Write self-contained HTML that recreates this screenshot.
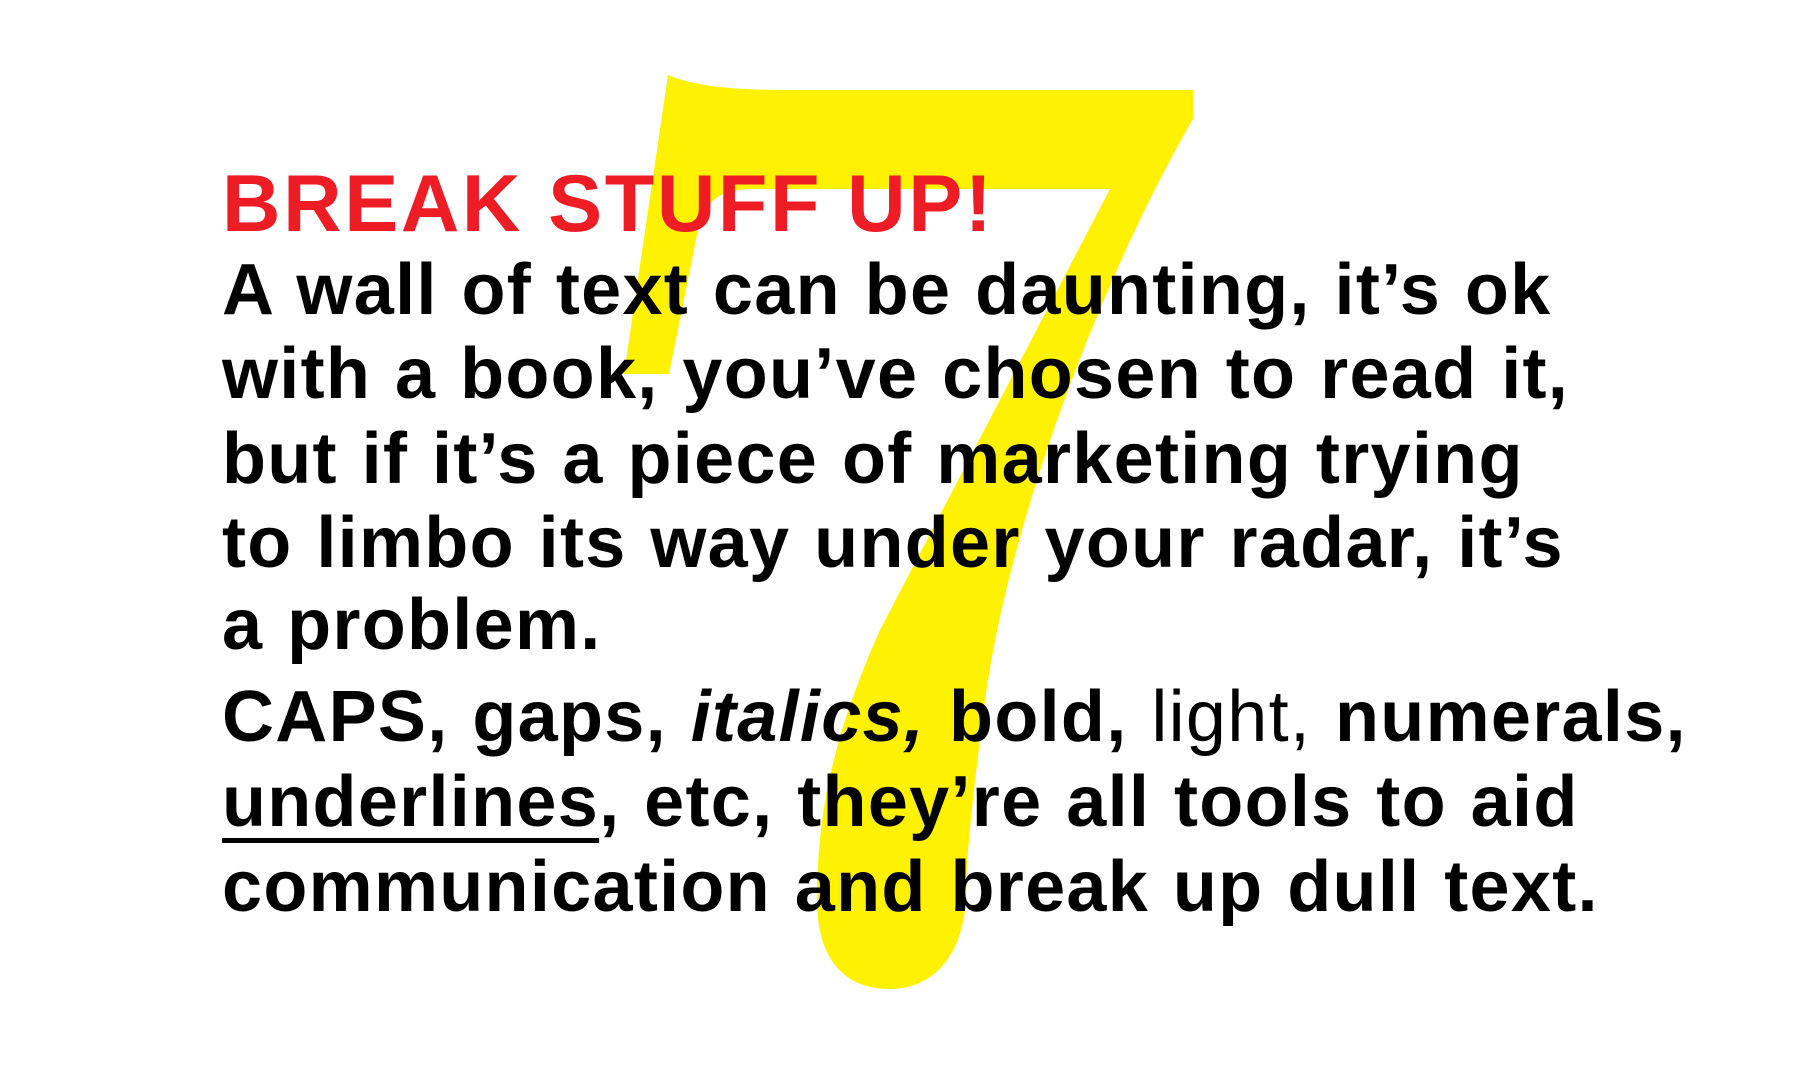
<!DOCTYPE html>
<html><head><meta charset="utf-8"><style>
html,body{margin:0;padding:0;background:#fff;}
body{width:1800px;height:1079px;position:relative;overflow:hidden;font-family:"Liberation Sans",Arial,sans-serif;}
svg{position:absolute;left:0;top:0;}
.l{position:absolute;left:222px;white-space:nowrap;font-size:72px;line-height:84px;font-weight:bold;color:#000;letter-spacing:1.3px;word-spacing:2.5px;}
.h{position:absolute;left:222px;top:164px;white-space:nowrap;font-size:81px;line-height:81px;font-weight:bold;color:#ee1c25;letter-spacing:2.6px;}
.i{font-style:italic;font-weight:bold;}
.b{font-weight:900;}
.lt{font-weight:normal;}
.u{text-decoration:underline;text-decoration-thickness:5px;text-underline-offset:12px;}
</style></head><body>
<svg width="1800" height="1079" viewBox="0 0 1800 1079">
<path fill="#fff200" d="M668,75 C700,88 740,90 796,90 L1193,90 L1193,119 C1100,280 1010,520 985,700 C975,780 966,850 966,900 C962,960 930,989 890,989 C845,989 817,960 817,900 C817,800 840,720 880,630 L1110,189 L754,189 C720,189 705,200 698,230 L669,374 L624,374 Z"/>
</svg>
<div class="h">BREAK STUFF UP!</div>
<div class="l" style="top:248px">A wall of text can be daunting, it’s ok</div>
<div class="l" style="top:332px">with a book, you’ve chosen to read it,</div>
<div class="l" style="top:417px">but if it’s a piece of marketing trying</div>
<div class="l" style="top:501px">to limbo its way under your radar, it’s</div>
<div class="l" style="top:583px">a problem.</div>
<div class="l" style="top:675px">CAPS, gaps, <span class="i">italics,</span> <span class="b">bold,</span> <span class="lt">light,</span> numerals,</div>
<div class="l" style="top:760px"><span class="u">underlines</span>, etc, they’re all tools to aid</div>
<div class="l" style="top:845px">communication and break up dull text.</div>
</body></html>
